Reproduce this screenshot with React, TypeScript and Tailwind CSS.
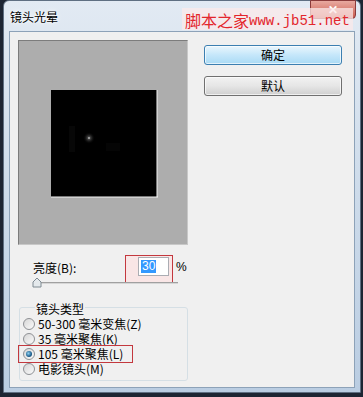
const cjk = "font-['SimSun','Noto_Sans_CJK_SC',sans-serif]";

const Radio = ({ checked, label }: { checked?: boolean; label: string }) => (
  <div className="h-[15px] flex items-center">
    <div className="ml-[3px] w-[12px] h-[12px] rounded-full border border-[#8e9094] bg-gradient-to-br from-[#d6d6d6] to-[#fbfbfb] flex items-center justify-center">
      {checked && (
        <div className="w-[6px] h-[6px] rounded-full bg-[radial-gradient(circle_at_40%_40%,#8fd0f0,#1d5f8e_60%,#0e3556)]" />
      )}
    </div>
    <span className="ml-[3px] leading-[12px]">{label}</span>
  </div>
);

export default function App() {
  return (
    <div className={`w-[363px] h-[397px] bg-[#1d2533] text-[12px] text-black ${cjk}`}>
      <div className="relative flex flex-col h-[393px] ml-[3px] mr-[2px] rounded-t-[6px] border border-[#5f6f82] bg-gradient-to-b from-[#e2eaf3] via-[#cddbea] to-[#bacde2]">
        {/* close button sits behind the watermark */}
        <div className="absolute top-[-1px] right-[4px] w-[46px] h-[19px] rounded-b-[4px] border border-[#8a3b3b] bg-gradient-to-b from-[#e8a9a0] to-[#c95a4e] flex items-center justify-center">
          <span className="text-white text-[12px] font-bold font-['Liberation_Sans',sans-serif] leading-none">✕</span>
        </div>

        {/* title bar */}
        <div className="relative z-10 h-[30px] flex items-start">
          <span className="mt-[9px] ml-[6px] leading-[14px] [text-shadow:0_0_6px_#ffffff,0_0_3px_#ffffff]">镜头光晕</span>
          <div className="mt-[7px] ml-[124px] h-[22px] pl-[3px] pr-[3px] flex items-end whitespace-nowrap bg-[#fbe9e9]/75 text-[#e3262c]">
            <span style={{ fontSize: 16, lineHeight: "19px", fontFamily: "'Noto Sans CJK SC', sans-serif" }}>脚本之家</span>
            <span style={{ fontSize: 14, lineHeight: "17px", fontFamily: "'Liberation Mono', monospace" }}>www.jb51.net</span>
          </div>
        </div>

        {/* client */}
        <div className="flex-1 mx-[5px] mb-[4px] bg-[#f0f0f0] border border-[#8da2b8] flex">
          <div className="w-[170px] ml-[8px] mt-[8px] flex flex-col">
            <div className="h-[205px] bg-[#adadad] border border-t-[#7c7c7c] border-l-[#7c7c7c] border-r-[#c8c8c8] border-b-[#c8c8c8] flex items-center justify-center">
              <svg width="107" height="108" viewBox="0 0 107 108" className="ml-[2px] mt-[2px]">
                <defs>
                  <radialGradient id="g" cx="0.5" cy="0.5" r="0.5">
                    <stop offset="0" stopColor="#ffffff" />
                    <stop offset="0.2" stopColor="#4a4a4a" />
                    <stop offset="1" stopColor="#000000" stopOpacity="0" />
                  </radialGradient>
                </defs>
                <rect x="0" y="0" width="106" height="107" fill="#000" />
                <rect x="18" y="36" width="6" height="26" fill="#070707" />
                <circle cx="38" cy="48" r="6" fill="url(#g)" />
                <rect x="55" y="53" width="14" height="8" fill="#050505" />
                <line x1="106" y1="0" x2="106" y2="107" stroke="#f4f4f4" strokeWidth="1" />
                <line x1="0" y1="107" x2="107" y2="107" stroke="#f4f4f4" strokeWidth="1" />
              </svg>
            </div>

            <div className="relative h-[26px] mt-[10px] flex items-center">
              <span className="ml-[15px] leading-[12px]">亮度(B):</span>
              <div className="absolute left-[107px] top-0 w-[48px] h-[28px] border-[1.5px] border-[#c3383e] bg-[#f9e6e6]" />
              <div className="absolute left-[120px] top-[2px] w-[31px] h-[19px] bg-white border border-[#abadb3] flex items-center pl-[2px]">
                <span className="bg-[#3399ff] text-white px-[1px] leading-[13px] font-['Liberation_Sans',sans-serif]">30</span>
              </div>
              <span className="absolute left-[158px] top-[6px] leading-[12px] font-['Liberation_Sans',sans-serif]">%</span>
            </div>
            <div className="relative h-[9px] mt-[-1px]">
              <div className="absolute left-[15px] top-[2px] w-[145px] h-[2px] bg-[#d6d6d6] border-t border-[#a0a0a0]" />
              <svg className="absolute left-[14px] top-[-3px]" width="10" height="11" viewBox="0 0 10 11">
                <path d="M1 5 L5 1 L9 5 L9 10 L1 10 Z" fill="#e4e9ec" stroke="#7e8a92" strokeWidth="1" />
              </svg>
            </div>

            <div className="relative mt-[18px] ml-[1px] h-[74px] border border-[#d5dfe5] rounded-[3px]">
              <span className="absolute left-[15px] top-[-5px] bg-[#f0f0f0] px-[1px] leading-[12px]">镜头类型</span>
              <div className="mt-[8px] flex flex-col">
                <Radio label="50-300 毫米变焦(Z)" />
                <Radio label="35 毫米聚焦(K)" />
                <Radio checked label="105 毫米聚焦(L)" />
                <Radio label="电影镜头(M)" />
              </div>
              <div className="absolute left-[-2px] top-[37px] w-[115px] h-[18px] border-[1.5px] border-[#c3383e]" />
            </div>
          </div>

          <div className="ml-[16px] mt-[13px] w-[138px] flex flex-col gap-[11px]">
            <div className="h-[20px] rounded-[3px] border border-[#3c7fb1] bg-gradient-to-b from-[#eaf6fd] via-[#c5e7fa] to-[#a9daf5] shadow-[inset_0_0_0_1px_#ffffffaa] flex items-center justify-center leading-[12px]">
              确定
            </div>
            <div className="h-[20px] rounded-[3px] border border-[#707070] bg-gradient-to-b from-[#f2f2f2] via-[#e6e6e6] to-[#cfcfcf] shadow-[inset_0_0_0_1px_#ffffffaa] flex items-center justify-center leading-[12px]">
              默认
            </div>
          </div>
        </div>
      </div>
    </div>
  );
}
